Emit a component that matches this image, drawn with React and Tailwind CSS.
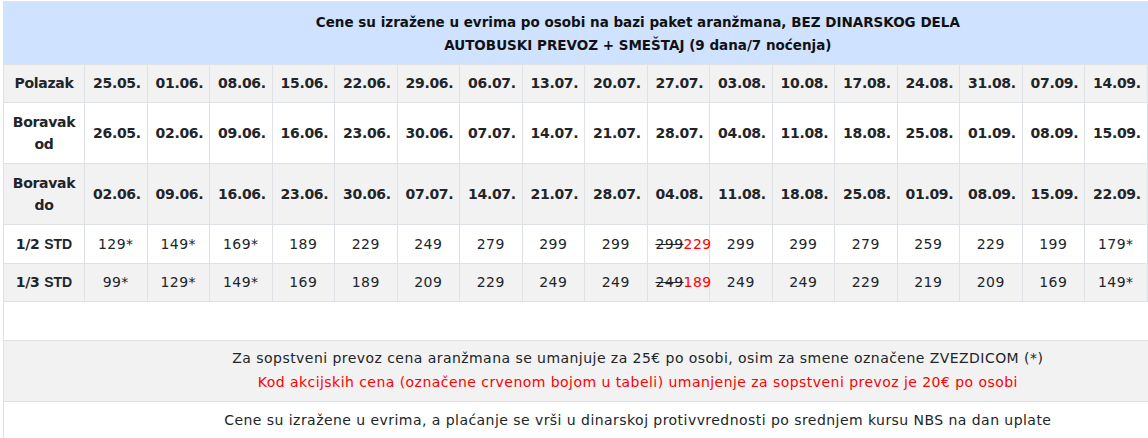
const polazak = ["25.05.","01.06.","08.06.","15.06.","22.06.","29.06.","06.07.","13.07.","20.07.","27.07.","03.08.","10.08.","17.08.","24.08.","31.08.","07.09.","14.09.","21.09.","28.09."];
const od = ["26.05.","02.06.","09.06.","16.06.","23.06.","30.06.","07.07.","14.07.","21.07.","28.07.","04.08.","11.08.","18.08.","25.08.","01.09.","08.09.","15.09.","22.09.","29.09."];
const doo = ["02.06.","09.06.","16.06.","23.06.","30.06.","07.07.","14.07.","21.07.","28.07.","04.08.","11.08.","18.08.","25.08.","01.09.","08.09.","15.09.","22.09.","29.09.","06.10."];
const std2 = ["129*","149*","169*","189","229","249","279","299","299",["299","229"],"299","299","279","259","229","199","179*","159*","149*"];
const std3 = ["99*","129*","149*","169","189","209","229","249","249",["249","189"],"249","249","229","219","209","169","149*","129*","119*"];

const cell = "border border-[#dee2e6] px-2 text-center align-middle whitespace-nowrap";

function Price({ v }) {
  if (Array.isArray(v)) {
    return (
      <span>
        <span className="line-through">{v[0]}</span>
        <span className="text-[#ff0000]">{v[1]}</span>
      </span>
    );
  }
  return <span>{v}</span>;
}

function Std({ n }) {
  return (
    <span className="font-bold tracking-[-0.3px]">
      {n}{" "}
      <span className="font-['Liberation_Sans',Arial,sans-serif] text-[14px] leading-none tracking-normal">STD</span>
    </span>
  );
}

export default function App() {
  return (
    <div className="w-[1148px] h-[438px] overflow-hidden bg-white font-['DejaVu_Sans',sans-serif] text-[14px] leading-[22px] text-[#212529] tracking-[0.45px]">
      <div className="pl-[3px] pt-[1px]">
        <table className="table-fixed border-collapse w-[1268px]">
          <colgroup>
            <col className="w-[81px]" />
            {polazak.map((_, i) => (
              <col key={i} className="w-[62.5px]" />
            ))}
          </colgroup>
          <tbody>
            <tr className="bg-[#cfe2ff]">
              <td colSpan={20} className={cell + " font-bold text-[13.5px] tracking-normal leading-[23px] text-[#111] pt-[9px] pb-[7px]"}>
                Cene su izražene u evrima po osobi na bazi paket aranžmana, BEZ DINARSKOG DELA
                <br />
                AUTOBUSKI PREVOZ + SMEŠTAJ (9 dana/7 noćenja)
              </td>
            </tr>
            <tr className="bg-[#f2f2f2] font-bold tracking-[-0.3px]">
              <td className={cell + " pt-[7px] pb-[8px]"}>Polazak</td>
              {polazak.map((d, i) => (
                <td key={i} className={cell + " pt-[7px] pb-[8px]"}>{d}</td>
              ))}
            </tr>
            <tr className="bg-white font-bold tracking-[-0.3px]">
              <td className={cell + " py-2"}>Boravak<br />od</td>
              {od.map((d, i) => (
                <td key={i} className={cell + " py-2"}>{d}</td>
              ))}
            </tr>
            <tr className="bg-[#f2f2f2] font-bold tracking-[-0.3px]">
              <td className={cell + " py-2"}>Boravak<br />do</td>
              {doo.map((d, i) => (
                <td key={i} className={cell + " py-2"}>{d}</td>
              ))}
            </tr>
            <tr className="bg-white">
              <td className={cell + " py-2"}><Std n="1/2" /></td>
              {std2.map((v, i) => (
                <td key={i} className={cell + " py-2"}><Price v={v} /></td>
              ))}
            </tr>
            <tr className="bg-[#f2f2f2]">
              <td className={cell + " pt-[7px] pb-[8px]"}><Std n="1/3" /></td>
              {std3.map((v, i) => (
                <td key={i} className={cell + " pt-[7px] pb-[8px]"}><Price v={v} /></td>
              ))}
            </tr>
            <tr className="bg-white">
              <td colSpan={20} className={cell + " py-2"}>&nbsp;</td>
            </tr>
            <tr className="bg-[#f2f2f2]">
              <td colSpan={20} className={cell + " leading-[24px] pt-[5px] pb-[7px]"}>
                Za sopstveni prevoz cena aranžmana se umanjuje za 25€ po osobi, osim za smene označene ZVEZDICOM (*)
                <br />
                <span className="text-[#ff0000]">Kod akcijskih cena (označene crvenom bojom u tabeli) umanjenje za sopstveni prevoz je 20€ po osobi</span>
              </td>
            </tr>
            <tr className="bg-white">
              <td colSpan={20} className={cell + " pt-[7px] pb-2"}>
                Cene su izražene u evrima, a plaćanje se vrši u dinarskoj protivvrednosti po srednjem kursu NBS na dan uplate
              </td>
            </tr>
          </tbody>
        </table>
      </div>
    </div>
  );
}
